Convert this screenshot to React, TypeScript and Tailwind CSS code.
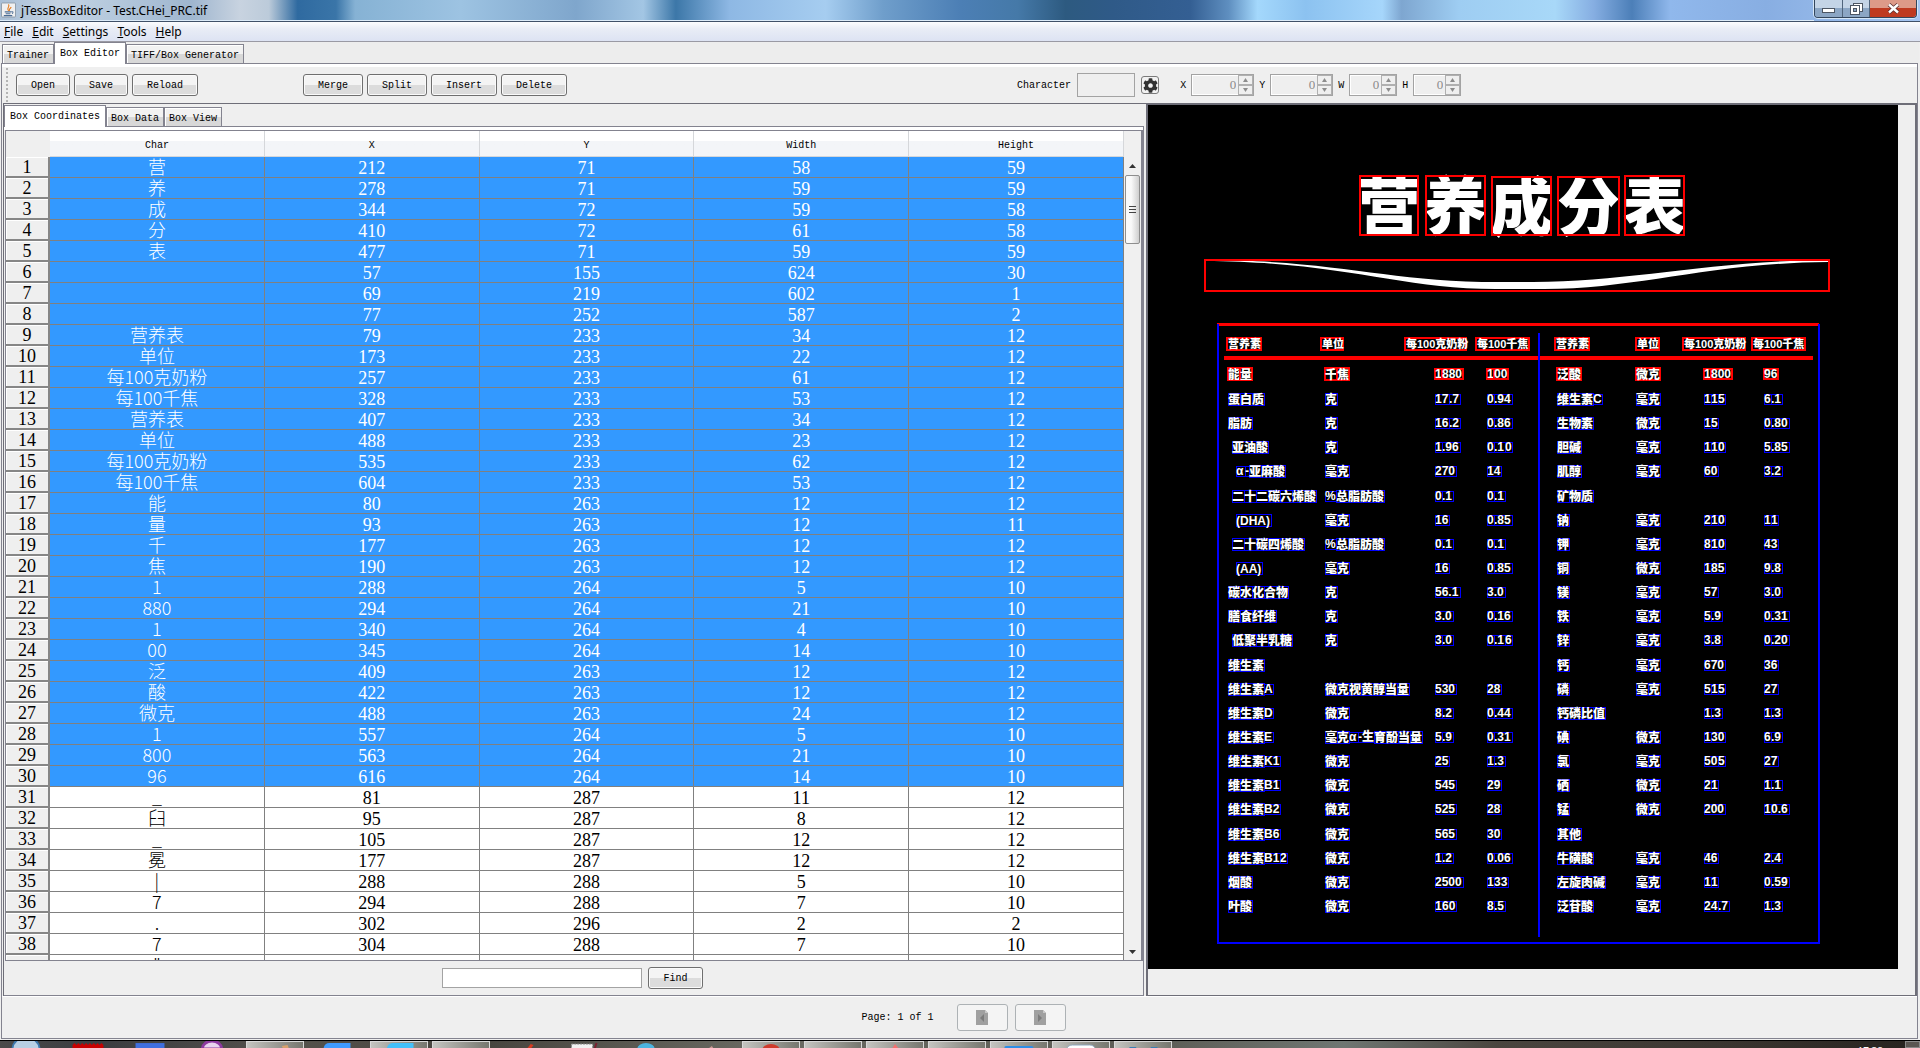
import React from "react";
import { FaCog } from "react-icons/fa";

type BoxRow = [string, string, string, string, string];

const rows: BoxRow[] = [
  ["营", "212", "71", "58", "59"],
  ["养", "278", "71", "59", "59"],
  ["成", "344", "72", "59", "58"],
  ["分", "410", "72", "61", "58"],
  ["表", "477", "71", "59", "59"],
  ["", "57", "155", "624", "30"],
  ["", "69", "219", "602", "1"],
  ["", "77", "252", "587", "2"],
  ["营养表", "79", "233", "34", "12"],
  ["单位", "173", "233", "22", "12"],
  ["每100克奶粉", "257", "233", "61", "12"],
  ["每100千焦", "328", "233", "53", "12"],
  ["营养表", "407", "233", "34", "12"],
  ["单位", "488", "233", "23", "12"],
  ["每100克奶粉", "535", "233", "62", "12"],
  ["每100千焦", "604", "233", "53", "12"],
  ["能", "80", "263", "12", "12"],
  ["量", "93", "263", "12", "11"],
  ["千", "177", "263", "12", "12"],
  ["焦", "190", "263", "12", "12"],
  ["1", "288", "264", "5", "10"],
  ["880", "294", "264", "21", "10"],
  ["1", "340", "264", "4", "10"],
  ["00", "345", "264", "14", "10"],
  ["泛", "409", "263", "12", "12"],
  ["酸", "422", "263", "12", "12"],
  ["微克", "488", "263", "24", "12"],
  ["1", "557", "264", "5", "10"],
  ["800", "563", "264", "21", "10"],
  ["96", "616", "264", "14", "10"],
  ["_", "81", "287", "11", "12"],
  ["臼", "95", "287", "8", "12"],
  ["_", "105", "287", "12", "12"],
  ["冕", "177", "287", "12", "12"],
  ["|", "288", "288", "5", "10"],
  ["7", "294", "288", "7", "10"],
  [".", "302", "296", "2", "2"],
  ["7", "304", "288", "7", "10"],
  ['"', "", "", "", ""],
];
const SELECTED = 30;

/* Each "|" separates two recognised boxes; a leading ">" indents the name. */
const leftTable: string[][] = [
  ["蛋|白|质", "克", "17|.7", "0|.94"],
  ["脂|肪", "克", "16|.2", "0|.86"],
  [">亚油|酸", "克", "1|.96", "0|.1|0"],
  [">>α|-|亚|麻|酸", "毫|克", "270", "14"],
  [">二|十|二|碳|六|烯酸", "%|总|脂肪酸", "0|.1", "0|.1"],
  [">>(DHA)", "毫|克", "16", "0|.85"],
  [">二|十|碳|四|烯|酸", "%|总|脂肪酸", "0|.1", "0|.1"],
  [">>(AA)", "毫|克", "16", "0|.85"],
  ["碳|水|化|合物", "克", "56.1", "3.0"],
  ["膳|食|纤|维", "克", "3.0", "0|.16"],
  [">低聚|半|乳糖", "克", "3|.0", "0|.1|6"],
  ["维|生素", "", "", ""],
  ["维|生素|A", "微|克|视|黄|醇|当|量", "530", "28"],
  ["维|生素|D", "微|克", "8|.2", "0|.44"],
  ["维|生素|E", "毫|克|α|-生|育|酚|当|量", "5|.9", "0|.31"],
  ["维|生素|K1", "微|克", "25", "1|.3"],
  ["维|生素|B1", "微克", "545", "29"],
  ["维|生|素|B2", "微克", "525", "28"],
  ["维|生素|B6", "微克", "565", "30"],
  ["维|生素|B1|2", "微克", "1|.2", "0|.06"],
  ["烟|酸", "微|克", "2500", "1|33"],
  ["叶|酸", "微|克", "1|60", "8|.5"],
];

const rightTable: string[][] = [
  ["维|生素|C", "毫|克", "1|1|5", "6|.1"],
  ["生|物|素", "微|克", "1|5", "0|.80"],
  ["胆|碱", "毫|克", "1|1|0", "5|.85"],
  ["肌醇", "毫|克", "60", "3|.2"],
  ["矿|物|质", "", "", ""],
  ["钠", "毫|克", "2|1|0", "1|1"],
  ["钾", "毫|克", "8|1|0", "43"],
  ["铜", "微克", "1|85", "9|.8"],
  ["镁", "毫|克", "57", "3|.0"],
  ["铁", "毫|克", "5|.9", "0|.31"],
  ["锌", "毫|克", "3|.8", "0|.20"],
  ["钙", "毫|克", "670", "36"],
  ["磷", "毫|克", "5|1|5", "27"],
  ["钙磷|比|值", "", "1|.3", "1|.3"],
  ["碘", "微克", "1|30", "6|.9"],
  ["氯", "毫|克", "50|5", "27"],
  ["硒", "微克", "2|1", "1|.1"],
  ["锰", "微|克", "200", "1|0.6"],
  ["其|他", "", "", ""],
  ["牛|磺|酸", "毫|克", "46", "2|.4"],
  ["左旋|肉碱", "毫|克", "1|1", "0|.59"],
  ["泛|苷|酸", "毫|克", "24|.7", "1|.3"],
];

function advance(ch: string) {
  if (ch.charCodeAt(0) > 0x2e80) return 12;
  if (ch === "." || ch === "(" || ch === ")" || ch === "-") return 4;
  if (ch === "%") return 11;
  if (/[A-Zα]/.test(ch)) return 9;
  return 7;
}

function Boxes({ text, x, cy, red }: { text: string; x: number; cy: number; red?: boolean }) {
  let cursor = x + (text.split(">").length - 1) * 4;
  return (
    <>
      {text
        .replace(/>/g, "")
        .split("|")
        .map((seg, i) => {
          const w = [...seg].reduce((a, c) => a + advance(c), 0);
          const left = cursor;
          cursor += w;
          const tall = seg.charCodeAt(0) > 0x2e80 || seg[0] === "(";
          const h = tall ? 12 : 10;
          return (
            <g key={i}>
              <rect
                x={left}
                y={cy - h / 2}
                width={w}
                height={h}
                fill="none"
                stroke={red ? "#f00" : "#00f"}
                strokeWidth={red ? 2 : 1}
                shapeRendering="crispEdges"
              />
              <text x={left} y={cy + (tall ? 5 : 4)} className="fill-white text-[12px] font-black">
                {seg}
              </text>
            </g>
          );
        })}
    </>
  );
}

function ScanCanvas() {
  const title: [string, number, number, number, number][] = [
    ["营", 212, 71, 58, 59],
    ["养", 278, 71, 59, 59],
    ["成", 344, 72, 59, 58],
    ["分", 410, 72, 61, 58],
    ["表", 477, 71, 59, 59],
  ];
  const head: [string, number, number][] = [
    ["营养素", 79, 34],
    ["单位", 173, 22],
    ["每100克奶粉", 257, 61],
    ["每100千焦", 328, 53],
    ["营养素", 407, 34],
    ["单位", 488, 23],
    ["每100克奶粉", 535, 62],
    ["每100千焦", 604, 53],
  ];
  const first: [string, number][] = [
    ["能|量", 80],
    ["千|焦", 177],
    ["1|880", 287],
    ["1|00", 339],
    ["泛|酸", 409],
    ["微克", 488],
    ["1|800", 556],
    ["96", 616],
  ];
  const leftX = [80, 177, 287, 339];
  const rightX = [409, 488, 556, 616];
  return (
    <svg
      width="750"
      height="864"
      viewBox="0 0 750 864"
      className="block bg-black font-['Liberation_Sans','Noto_Sans_CJK_SC',sans-serif]"
      role="img"
      aria-label="营养成分表"
    >
      {title.map(([ch, x, y, w, h]) => (
        <g key={ch}>
          <text
            x={x + w / 2}
            y={y + 53}
            textAnchor="middle"
            className="fill-white font-['Noto_Sans_CJK_SC',sans-serif] text-[63px] font-black"
          >
            {ch}
          </text>
          <rect x={x} y={y} width={w} height={h} fill="none" stroke="#f00" strokeWidth="2" />
        </g>
      ))}
      <path
        fill="#fff"
        d="M57 155C190 155 240 177 350 177H385C480 177 560 156 680 155V157C560 158 490 184 396 184H348C250 184 198 157 57 156Z"
      />
      <rect x="57" y="155" width="624" height="31" fill="none" stroke="#f00" strokeWidth="2" />
      <rect x="69" y="218" width="602" height="3" fill="#f00" />
      {head.map(([t, x, w]) => (
        <g key={x}>
          <rect x={x} y="233" width={w} height="12" fill="none" stroke="#f00" strokeWidth="2" />
          <text x={x + 1} y="243" className="fill-white text-[11px] font-black">
            {t}
          </text>
        </g>
      ))}
      {first.map(([t, x]) => (
        <Boxes key={x} text={t} x={x} cy={269} red />
      ))}
      {leftTable.map((r, i) =>
        r.map((t, c) => t && <Boxes key={`l${i}-${c}`} text={t} x={leftX[c]} cy={294 + Math.round((i * 507) / 21)} />),
      )}
      {rightTable.map((r, i) =>
        r.map((t, c) => t && <Boxes key={`r${i}-${c}`} text={t} x={rightX[c]} cy={294 + Math.round((i * 507) / 21)} />),
      )}
      <path d="M70 219V838H671V219M391 228V832" fill="none" stroke="#00f" strokeWidth="2" />
      <rect x="76" y="251" width="589" height="4" fill="#f00" />
      <path d="M391 250V256" stroke="#00f" strokeWidth="2" />
    </svg>
  );
}

function SwingButton({ children }: { children: React.ReactNode }) {
  return (
    <button className="h-[22px] rounded-[3px] border border-[#6f6f6f] bg-linear-to-b from-[#f4f4f4] from-50% to-[#dcdcdc] to-50% px-[14px] pt-px leading-none shadow-[inset_0_0_0_1px_#fafafa]">
      {children}
    </button>
  );
}

function Tab({ label, active }: { label: string; active?: boolean }) {
  return active ? (
    <button
      role="tab"
      aria-selected="true"
      className="relative -mb-px flex h-[22px] items-center border-x border-t border-[#83838f] bg-white px-[5px]"
    >
      {label}
    </button>
  ) : (
    <button
      role="tab"
      aria-selected="false"
      className="flex h-[19px] items-center border-x border-t border-[#83838f] bg-linear-to-b from-[#f2f2f2] from-50% to-[#d8d8d8] to-50% px-1 pt-0.5 shadow-[inset_1px_1px_0_#fff]"
    >
      {label}
    </button>
  );
}

function Spinner({ label, wide }: { label: string; wide?: boolean }) {
  return (
    <label className="flex items-center gap-[5px]">
      {label}
      <span
        className={
          (wide ? "w-[63px]" : "w-[48px]") +
          " flex h-[22px] border border-[#a3a3a3] bg-[#efefef] shadow-[inset_0_0_0_1px_#fff]"
        }
      >
        <input
          disabled
          value="0"
          readOnly
          className="w-0 min-w-0 flex-1 bg-transparent pr-[2px] text-right font-['Liberation_Serif',serif] text-[13px] text-[#8a8a8a]"
        />
        <span className="flex w-[15px] flex-col">
          <button
            disabled
            aria-label="Increase"
            className="flex flex-1 items-center justify-center border border-[#b0b0b0]"
          >
            <svg width="5" height="4" viewBox="0 0 5 4">
              <path d="M0 4L2.5 0L5 4Z" fill="#8c8c8c" />
            </svg>
          </button>
          <button
            disabled
            aria-label="Decrease"
            className="flex flex-1 items-center justify-center border border-[#b0b0b0]"
          >
            <svg width="5" height="4" viewBox="0 0 5 4">
              <path d="M0 0L2.5 4L5 0Z" fill="#8c8c8c" />
            </svg>
          </button>
        </span>
      </span>
    </label>
  );
}

function PageButton({ next }: { next?: boolean }) {
  return (
    <button
      disabled
      aria-label={next ? "Next page" : "Previous page"}
      className="flex h-[27px] w-[51px] items-center justify-center rounded-[3px] border border-[#adb2b5] bg-[#f4f4f4]"
    >
      <svg width="12" height="15" viewBox="0 0 12 15">
        <path d="M0 0H9L12 3V15H0Z" fill="#a0a0a0" />
        <path d="M9 0V3H12Z" fill="#c8c8c8" />
        <path d={next ? "M4 4L8 8L4 12Z" : "M8 4L4 8L8 12Z"} fill="#7c7c7c" />
      </svg>
    </button>
  );
}

const taskIcons: { tile?: boolean; art: React.ReactNode }[] = [
  { art: <path d="M15 8a14 12 0 0 1 28 0Z" fill="#b8cfe4" stroke="#3e78ad" strokeWidth="2" /> },
  { art: <path d="M13 8V4l2-2 2 2 2-2 2 2 2-2 2 2 2-2 2 2 2-2 2 2 2-2 2 2 2-2 2 2 2-2 2 2V8Z" fill="#c80000" /> },
  { art: <path d="M14 2H44V8H14Z" fill="#3f6fe0" /> },
  { art: <path d="M19 8a10 8 0 0 1 20 0Z" fill="#e8d4ee" stroke="#8d3aa0" strokeWidth="3" /> },
  { tile: true, art: <path d="M36 4L42 3L44 8H38Z" fill="#d8a06c" /> },
  { art: <path d="M16 8Q17 2 22 2H44V8Z" fill="#3f9bff" /> },
  { tile: true, art: <path d="M16 8Q17 2 22 1H44V8Z" fill="#43c0fa" /> },
  { tile: true, art: null },
  { art: <path d="M34 8L38 3L41 4L38 8Z" fill="#d93a20" /> },
  {
    art: (
      <>
        <path d="M16 3H38V8H16Z" fill="#f2f2f2" stroke="#888" strokeDasharray="2 1" />
        <path d="M42 2L40 8" stroke="#7b2030" strokeWidth="2" />
      </>
    ),
  },
  { art: <path d="M20 8a9 6 0 0 1 18 0Z" fill="#4cb4e0" /> },
  { art: <path d="M29 8L33 5L35 8Z" fill="#c99a94" /> },
  { tile: true, art: <path d="M20 8a9 6 0 0 1 18 0Z" fill="#cf3a2c" /> },
  { tile: true, art: <path d="M16 6H28V8H16Z" fill="#c7b36a" /> },
  { tile: true, art: <path d="M25 8L29 2L34 8Z" fill="#f57070" /> },
  { tile: true, art: <path d="M14 6H42V8H14Z" fill="#686868" /> },
  { tile: true, art: <path d="M14 8V5Q14 4 16 4H42Q44 4 44 6V8Z" fill="#2d8ee8" /> },
  { tile: true, art: <path d="M14 8Q15 3 20 3H38Q43 3 44 8Z" fill="#fff" stroke="#8fa9c0" /> },
  {
    tile: true,
    art: (
      <>
        <path d="M15 5H22V8H15Z" fill="#3a7fb5" />
        <path d="M37 5H44V8H37Z" fill="#3a7fb5" />
      </>
    ),
  },
];

function TitleBar() {
  return (
    <header className="flex h-[22px] items-start border-b border-[#3f5068] bg-[linear-gradient(90deg,#a9bfd6_0%,#c3d2e2_3%,#b4c8dc_6%,#9fb6cf_10%,#c8d3e0_12.5%,#bccbda_14%,#2f6aa0_15.5%,#3a75a8_17.5%,#86b2d4_18.5%,#9dc3e2_24%,#7fa6cc_30%,#a3c6e4_33.5%,#3c77a8_35.2%,#8eb8e4_38%,#a6cdf0_43%,#6f9ecb_46%,#4c7fb5_50%,#4579a8_53%,#2d5a80_55.5%,#2f5a88_58%,#345f93_62%,#5f8fc0_64%,#a4d8fc_65.5%,#8cc2f0_68%,#a6d6fb_72%,#7ea6d0_73%,#9ecdf2_76%,#a8d8f8_81%,#86aee2_83%,#4c7fb8_85%,#90b8ec_87%,#88aee2_92%,#a6c6f2_100%)]">
      <div className="flex h-[21px] flex-1 items-center gap-[5px] border-b border-[#dcebf8] pl-px">
        <svg width="15" height="16" viewBox="0 0 16 16" aria-hidden="true">
          <rect x="0.5" y="0.5" width="15" height="15" rx="1" fill="#f0f0f0" stroke="#8c9aa8" />
          <path d="M8 9C5 6 10 5 8 2M9 9C8 7 10 6 11 5" stroke="#e47a1c" strokeWidth="1.2" fill="none" />
          <path d="M4 10H11M5 12H10M3 14H12M11 10Q14 9 12 12" stroke="#4c6d94" strokeWidth="1.1" fill="none" />
        </svg>
        <h1 className="pt-0.5 text-[12px]">jTessBoxEditor - Test.CHei_PRC.tif</h1>
      </div>
      <div className="mr-[3px] flex h-[18px] w-[103px] overflow-hidden rounded-b-[4px] border-x border-b border-[#34465c] shadow-[0_0_0_1px_#d5e6f7]">
        <button
          aria-label="Minimize"
          className="flex w-[28px] items-center justify-center border-r border-[#51657c] bg-linear-to-b from-[#c4d4e6] from-50% to-[#8ca6c4] to-50%"
        >
          <svg width="13" height="5" viewBox="0 0 13 5" className="mt-1">
            <rect x="0.5" y="0.5" width="12" height="4" fill="#fff" stroke="#4d5663" />
          </svg>
        </button>
        <button
          aria-label="Restore"
          className="flex w-[27px] items-center justify-center border-r border-[#51657c] bg-linear-to-b from-[#c4d4e6] from-50% to-[#8ca6c4] to-50%"
        >
          <svg width="13" height="12" viewBox="0 0 13 12" stroke="#4d5663" fill="#fff">
            <rect x="3.5" y="0.5" width="9" height="8" />
            <rect x="0.5" y="2.5" width="9" height="9" />
            <rect x="3.5" y="5.5" width="3" height="3" fill="#8ca6c4" />
          </svg>
        </button>
        <button
          aria-label="Close"
          className="flex flex-1 items-center justify-center bg-linear-to-b from-[#dd9a88] from-50% to-[#bf3a20] to-50%"
        >
          <svg width="13" height="11" viewBox="0 0 13 11">
            <path d="M2 1.5L11 9.5M11 1.5L2 9.5" stroke="#5a3030" strokeWidth="4" />
            <path d="M2 1.5L11 9.5M11 1.5L2 9.5" stroke="#fff" strokeWidth="2.4" />
          </svg>
        </button>
      </div>
    </header>
  );
}

function MenuBar() {
  return (
    <nav className="flex h-[20px] items-center gap-[9px] border-b border-[#9a9aa4] bg-linear-to-b from-[#fbfcfe] via-[#e9edf6] via-35% to-[#dde3f3] pl-1 text-[12px]">
      {["File", "Edit", "Settings", "Tools", "Help"].map((m) => (
        <button key={m} className="leading-none">
          <span className="underline underline-offset-1">{m[0]}</span>
          {m.slice(1)}
        </button>
      ))}
    </nav>
  );
}

function Toolbar() {
  return (
    <div className="flex h-[36px] shrink-0 items-center bg-[#efefef] pl-1">
      <div className="mr-2 h-[34px] border-l-2 border-dotted border-[#b4b4b4]" />
      <div className="flex gap-1">
        <SwingButton>Open</SwingButton>
        <SwingButton>Save</SwingButton>
        <SwingButton>Reload</SwingButton>
      </div>
      <div className="ml-[105px] flex gap-1">
        <SwingButton>Merge</SwingButton>
        <SwingButton>Split</SwingButton>
        <SwingButton>Insert</SwingButton>
        <SwingButton>Delete</SwingButton>
      </div>
      <label className="ml-[450px] flex items-center gap-1.5">
        Character
        <input disabled className="h-[24px] w-[58px] border border-[#a3a3a3] bg-[#efefef]" />
      </label>
      <button
        aria-label="Convert"
        className="mr-[21px] ml-1.5 flex h-[18px] w-[18px] items-center justify-center rounded-[3px] border border-[#7a7a7a] bg-[#f2f2f2]"
      >
        <FaCog size={15} color="#333" />
      </button>
      <div className="flex gap-[5px]">
        <Spinner label="X" wide />
        <Spinner label="Y" wide />
        <Spinner label="W" />
        <Spinner label="H" />
      </div>
    </div>
  );
}

function CoordinateTable() {
  return (
    <div className="flex min-h-0 flex-1 overflow-hidden border border-[#83838f] bg-[#efefef]">
      <div className="min-w-0 flex-1 overflow-hidden">
        <table className="w-full table-fixed border-separate border-spacing-0">
          <thead>
            <tr className="h-[26px]">
              <th className="w-[44px] bg-[#efefef]" aria-label="Row" />
              {["Char", "X", "Y", "Width", "Height"].map((h) => (
                <th
                  key={h}
                  className="border-r border-b border-[#d5d7da] bg-linear-to-b from-white from-40% to-[#f3f5f8] to-42% p-0 pt-1 font-normal"
                >
                  {h}
                </th>
              ))}
            </tr>
          </thead>
          <tbody className="text-[18px] leading-[18px]">
            {rows.map((r, i) => (
              <tr key={i} className={i < SELECTED ? "h-[21px] bg-[#3399ff] text-white" : "h-[21px] bg-white text-black"}>
                <th className="h-[21px] border-r-2 border-b-2 border-[#868686] bg-[#efefef] p-0 pt-0.5 font-['Liberation_Serif',serif] leading-[17px] font-normal text-black shadow-[inset_1px_1px_0_#fff]">
                  {i < 38 ? i + 1 : ""}
                </th>
                {r.map((v, c) => (
                  <td
                    key={c}
                    className={
                      c === 0
                        ? "h-[21px] border-r border-b border-[#808080] p-0 pb-0.5 text-center font-['Noto_Sans_CJK_SC',sans-serif] font-light"
                        : "h-[21px] border-r border-b border-[#808080] p-0 pt-0.5 text-center font-['Liberation_Serif',serif]"
                    }
                  >
                    {v}
                  </td>
                ))}
              </tr>
            ))}
          </tbody>
        </table>
      </div>
      <div className="flex w-[18px] flex-col items-center border-r border-[#83838f] bg-[#f0f0f0] pt-[26px]">
        <button aria-label="Scroll up" className="flex h-[18px] items-center">
          <svg width="7" height="4" viewBox="0 0 7 4">
            <path d="M0 4L3.5 0L7 4Z" fill="#333" />
          </svg>
        </button>
        <div className="flex h-[69px] w-[15px] flex-col items-center justify-center gap-[2px] rounded-[2px] border border-[#8e8e8e] bg-linear-to-r from-[#fafafa] from-40% to-[#cfcfcf]">
          <span className="h-px w-[7px] bg-[#444]" />
          <span className="h-px w-[7px] bg-[#444]" />
          <span className="h-px w-[7px] bg-[#444]" />
        </div>
        <button aria-label="Scroll down" className="mt-auto flex h-[17px] items-center">
          <svg width="7" height="4" viewBox="0 0 7 4">
            <path d="M0 0L3.5 4L7 0Z" fill="#333" />
          </svg>
        </button>
      </div>
    </div>
  );
}

export default function App() {
  return (
    <div className="flex h-screen flex-col overflow-hidden bg-[#efefef] font-['Noto_Sans','Open_Sans',sans-serif] text-black">
      <TitleBar />
      <MenuBar />
      <main className="flex min-h-0 flex-1 flex-col px-px font-['Liberation_Mono','Noto_Sans_CJK_SC',monospace] text-[10px]">
        <div role="tablist" className="flex h-[21px] shrink-0 items-end bg-[#ededed] pl-px">
          <Tab label="Trainer" />
          <Tab label="Box Editor" active />
          <Tab label="TIFF/Box Generator" />
        </div>
        <section className="mr-px flex min-h-0 flex-1 flex-col border border-[#83838f]">
          <div className="h-[3px] shrink-0 bg-white" />
          <Toolbar />
          <div className="flex min-h-0 flex-1 border-b border-white pl-px">
            <div className="flex min-w-0 flex-1 flex-col border-t border-l border-[#6e6e78]">
              <div role="tablist" className="flex h-[22px] shrink-0 items-end">
                <Tab label="Box Coordinates" active />
                <Tab label="Box Data" />
                <Tab label="Box View" />
              </div>
              <div className="mr-[2px] flex min-h-0 flex-1 flex-col border-t border-r border-b border-[#83838f]">
                <div className="h-[3px] shrink-0 bg-white" />
                <div className="flex min-h-0 flex-1 flex-col pl-px">
                  <CoordinateTable />
                </div>
                <div className="flex h-[34px] shrink-0 items-center justify-center gap-1.5 pr-0.5">
                  <input aria-label="Find text" className="h-[20px] w-[200px] border border-[#a3a3a3] bg-white px-1" />
                  <SwingButton>Find</SwingButton>
                </div>
              </div>
            </div>
            <div className="w-[771px] shrink-0 overflow-hidden border-2 border-b border-[#6e6e78]">
              <ScanCanvas />
            </div>
          </div>
          <footer className="flex h-[41px] shrink-0 items-center justify-center gap-[7px] pl-2">
            <span className="mr-4">Page: 1 of 1</span>
            <PageButton />
            <PageButton next />
          </footer>
        </section>
      </main>
      <div className="mt-px flex h-[8px] shrink-0 overflow-hidden border-t border-black bg-[linear-gradient(90deg,#4a4a4a_0%,#3a3c40_5%,#55524c_15%,#46443e_25%,#6a6a62_40%,#5c5c55_60%,#6f7672_70%,#4a453f_78%,#3a3530_90%,#26221e_100%)]">
        <div className="-ml-[2px] flex gap-1">
          {taskIcons.map((t, i) => (
            <div
              key={i}
              className={
                t.tile
                  ? "w-[58px] shrink-0 border-x border-t border-[#d8d8d8] bg-linear-to-r from-[#c4c4c0] to-[#77776f]"
                  : "w-[58px] shrink-0"
              }
            >
              <svg width="56" height="8" viewBox="0 0 58 8" className="block" aria-hidden="true">
                {t.art}
              </svg>
            </div>
          ))}
        </div>
        <span className="mt-[5px] ml-auto text-[10px] leading-none text-white">17:38</span>
        <button aria-label="Show desktop" className="ml-[22px] w-[15px] border border-[#888] bg-[#5a5652]" />
      </div>
    </div>
  );
}
